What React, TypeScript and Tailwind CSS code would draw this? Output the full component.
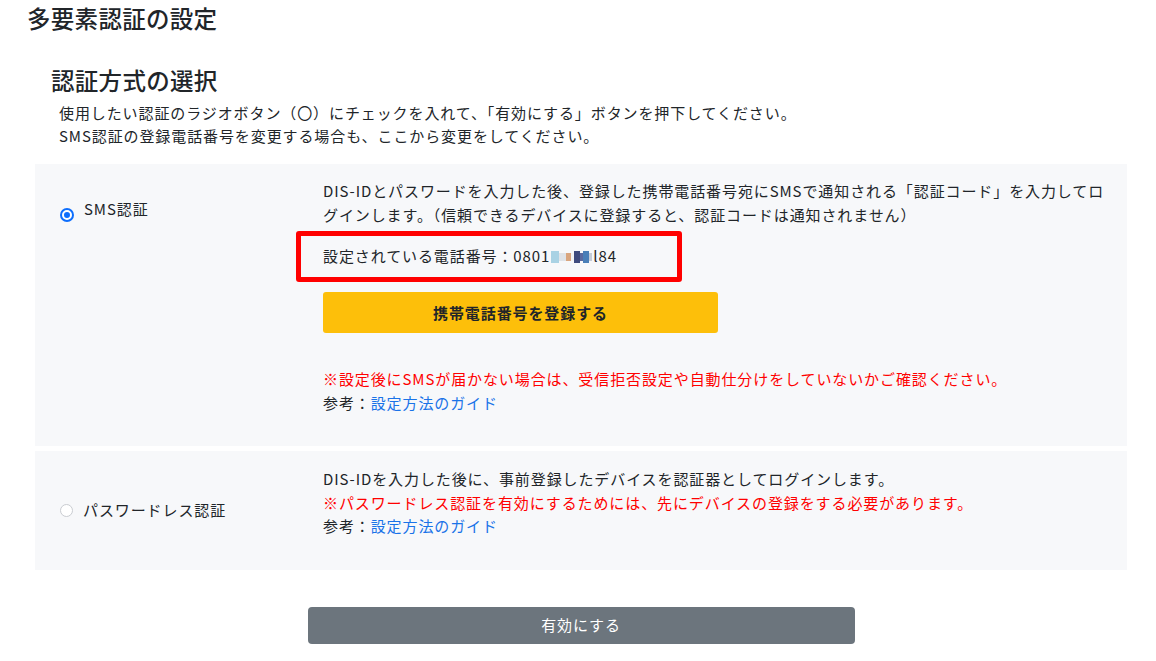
import React from 'react';

const font = { fontFamily: '"Noto Sans CJK JP", "Noto Sans", sans-serif' };

const Radio = ({ checked }: { checked: boolean }) =>
  checked ? (
    <span className="inline-flex h-[14px] w-[14px] items-center justify-center rounded-full bg-[#0d6efd]">
      <span className="h-[10px] w-[10px] rounded-full border-[2px] border-white bg-[#0d6efd]" />
    </span>
  ) : (
    <span className="inline-block h-[13px] w-[13px] rounded-full border border-[#c9ccd1] bg-white" />
  );

const GuideLink = () => (
  <p>
    参考：<a href="#" className="text-[#1a73e8]">設定方法のガイド</a>
  </p>
);

const Pixelated = () => (
  <span className="mx-[1px] inline-flex h-[12px] items-center align-[-1px]">
    <span className="h-[12px] w-[8px] bg-[#a9d2e4]" />
    <span className="h-[8px] w-[7px] bg-[#dfe3e8]" />
    <span className="h-[8px] w-[5px] bg-[#d9a57e]" />
    <span className="h-[8px] w-[3px] bg-[#f3f4f6]" />
    <span className="h-[12px] w-[6px] bg-[#3f4b7e]" />
    <span className="h-[8px] w-[3px] bg-[#5b6aa0]" />
    <span className="h-[12px] w-[6px] bg-[#4a7fb8]" />
    <span className="h-[8px] w-[3px] bg-[#c5ccd8]" />
  </span>
);

export default function App() {
  return (
    <div className="min-h-screen bg-white text-[#212529]" style={font}>
      <h1 className="pl-[27px] pt-[3px] text-[23.5px] leading-[30px] font-medium tracking-[0.3px]">多要素認証の設定</h1>

      <div className="px-[35px] pr-[29px]">
        <h2 className="mt-[31px] pl-[16px] text-[23.5px] leading-[32px] font-medium tracking-[0.3px]">認証方式の選択</h2>
        <div className="mt-[5px] pl-[24px] text-[15px] leading-[23px] tracking-[0.9px]">
          <p>使用したい認証のラジオボタン（〇）にチェックを入れて、「有効にする」ボタンを押下してください。</p>
          <p>SMS認証の登録電話番号を変更する場合も、ここから変更をしてください。</p>
        </div>

        <div className="mt-[17px] flex flex-col gap-[5px] text-[15px] leading-[24px] tracking-[0.9px]">
          {/* SMS */}
          <div className="flex bg-[#f7f8fa] pb-[31px] pt-[15px]">
            <label className="flex w-[288px] shrink-0 items-start gap-[10px] pl-[25px] pt-[18px]">
              <span className="mt-[5px]">
                <Radio checked />
              </span>
              <span>SMS認証</span>
            </label>
            <div className="w-[786px]">
              <p className="break-all">
                DIS-IDとパスワードを入力した後、登録した携帯電話番号宛にSMSで通知される「認証コード」を入力してログインします。（信頼できるデバイスに登録すると、認証コードは通知されません）
              </p>
              <div className="relative mt-[17px]">
                <p>
                  設定されている電話番号：0801
                  <Pixelated />
                  l84
                </p>
                <span className="pointer-events-none absolute left-[-27px] top-[-13px] h-[51px] w-[386px] rounded-[3px] border-[5px] border-[#ff0000]" />
              </div>
              <button className="mt-[24px] h-[41px] w-[395px] rounded-[3px] bg-[#fdbf0a] font-bold text-[#212529]">
                携帯電話番号を登録する
              </button>
              <p className="mt-[34px] text-[#ff0000]">
                ※設定後にSMSが届かない場合は、受信拒否設定や自動仕分けをしていないかご確認ください。
              </p>
              <GuideLink />
            </div>
          </div>

          {/* Passwordless */}
          <div className="flex items-center bg-[#f7f8fa] pb-[32px] pt-[16px]">
            <label className="flex w-[288px] shrink-0 items-center gap-[10px] pl-[25px] pt-[16px]">
              <Radio checked={false} />
              <span>パスワードレス認証</span>
            </label>
            <div className="w-[786px] leading-[23.5px]">
              <p>DIS-IDを入力した後に、事前登録したデバイスを認証器としてログインします。</p>
              <p className="text-[#ff0000]">
                ※パスワードレス認証を有効にするためには、先にデバイスの登録をする必要があります。
              </p>
              <GuideLink />
            </div>
          </div>
        </div>

        <div className="mt-[37px] flex justify-center">
          <button className="h-[37px] w-[547px] rounded-[4px] bg-[#6c757d] text-[15px] tracking-[0.9px] text-white">
            有効にする
          </button>
        </div>
      </div>
    </div>
  );
}
